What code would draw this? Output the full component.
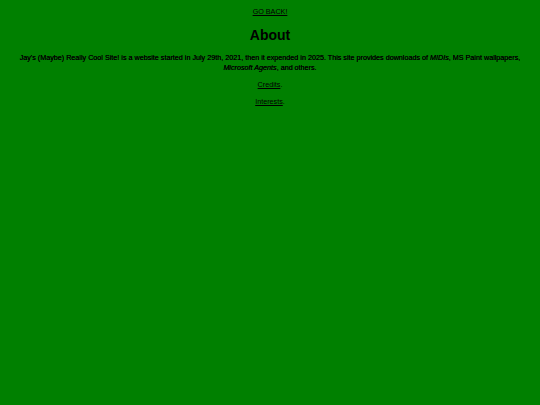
export default function App() {
  return (
    <div
      className="min-h-[405px] w-full bg-[#008000] text-black text-center px-[19px] pt-[7px]"
      style={{ fontFamily: '"Comic Sans MS", "Liberation Sans", sans-serif' }}
    >
      <p className="text-[7.2px] leading-[10px]">
        <a href="#" className="underline">GO BACK!</a>
      </p>
      <h1 className="text-[14px] font-bold leading-[18px] mt-[9px]">About</h1>
      <p className="text-[7.2px] leading-[10px] mt-[9px] [text-shadow:0_0_0.3px_#000]">
        Jay's (Maybe) Really Cool Site! is a website started in July 29th, 2021, then it expended in 2025. This site provides downloads of <i>MIDIs</i>, MS Paint wallpapers, <i>Microsoft Agents</i>, and others.
      </p>
      <p className="text-[7.2px] leading-[10px] mt-[7px]">
        <a href="#" className="underline">Credits</a>.
      </p>
      <p className="text-[7.2px] leading-[10px] mt-[7px]">
        <a href="#" className="underline">Interests</a>.
      </p>
    </div>
  );
}
